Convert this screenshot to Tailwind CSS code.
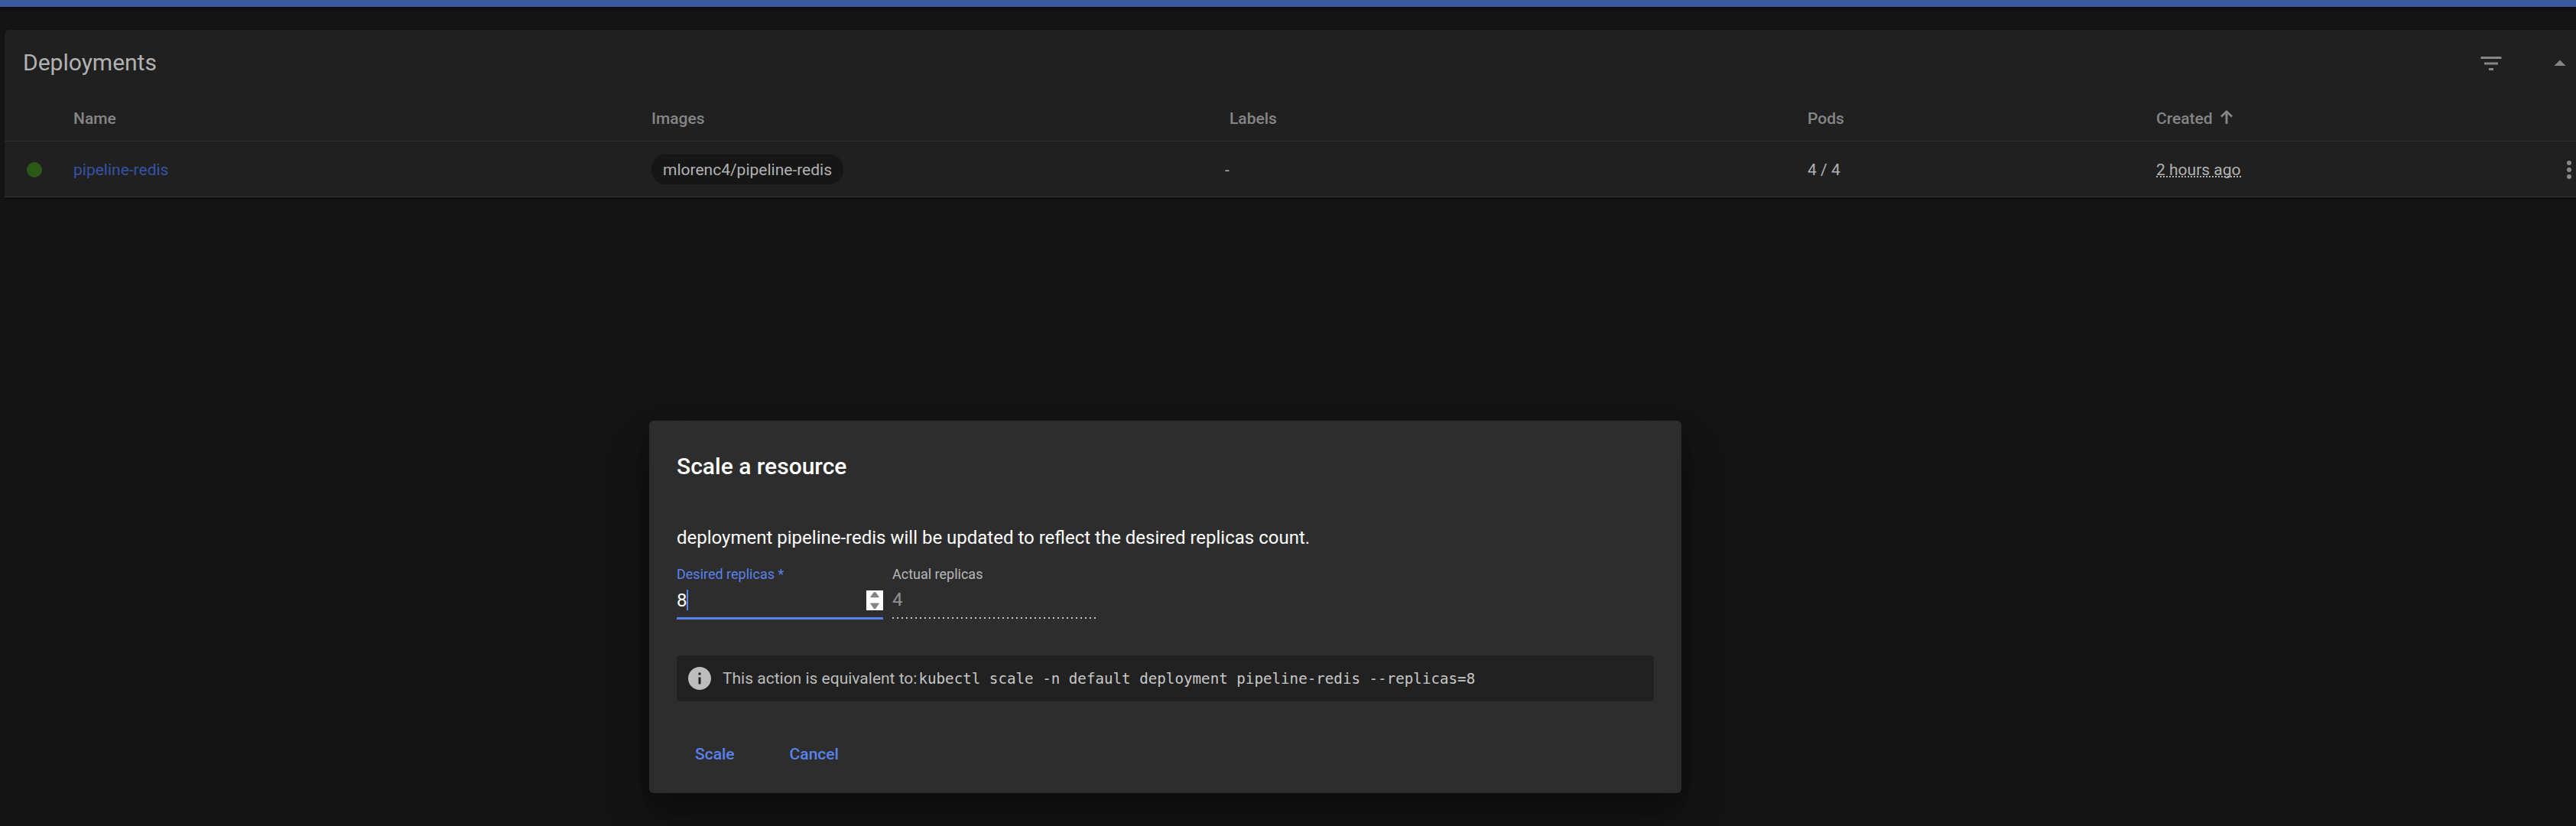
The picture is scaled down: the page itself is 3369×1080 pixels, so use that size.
<!DOCTYPE html>
<html lang="en">
<head>
<meta charset="utf-8">
<title>Deployments</title>
<script src="https://cdn.jsdelivr.net/npm/@tailwindcss/browser@4"></script>
</head>
<body class="h-[1080px] w-[3369px] overflow-hidden bg-[#141414] font-[Roboto,sans-serif] text-[21px] leading-7 text-[#b2b2b2]">
<header class="h-[9px] bg-[#3c589f] shadow-[0_3px_6px_rgba(0,0,0,.3)]"></header>
<main class="mt-[30px] ml-[6px] h-[219px] w-[3372px] rounded-t-md bg-[#202020] shadow-[0_2px_3px_rgba(0,0,0,.35)]">
  <div class="flex h-[86px] items-center pl-6">
    <h1 class="text-[30px] leading-9">Deployments</h1>
    <svg class="mt-0.5 ml-auto size-9 fill-[#868686]" viewBox="0 0 24 24"><path d="M10 18h4v-2h-4v2zM3 6v2h18V6H3zm3 7h12v-2H6v2z"/></svg>
    <svg class="mt-0.5 mr-3 ml-[54px] size-9 fill-[#868686]" viewBox="0 0 24 24"><path d="M7 14l5-5 5 5z"/></svg>
  </div>
  <div class="grid h-[60px] grid-cols-[90px_756px_756px_756px_456px_1fr] items-center border-b border-[#303030] font-medium text-[#868686]">
    <span></span><span>Name</span><span>Images</span><span>Labels</span><span>Pods</span>
    <span class="flex items-center">Created
      <svg class="mb-1 ml-[9px] h-[18px] w-[18px] fill-[#868686]" viewBox="0 0 18 18"><path d="M7.500 18V5L3 9.500 1 7.500 9 0l8 7.500-2 2L10.500 5V18z"/></svg>
    </span>
  </div>
  <div class="grid h-[73px] grid-cols-[90px_756px_750px_762px_456px_1fr] items-center border-b border-[#383838] pt-px">
    <span class="ml-[29px] size-5 rounded-full bg-[#2d5917]"></span>
    <a class="pt-px text-[#3653a5]">pipeline-redis</a>
    <span class="flex"><span class="flex h-[39px] items-center rounded-[18px] bg-[#161616] px-[15px] pt-px">mlorenc4/pipeline-redis</span></span>
    <span class="pt-px">-</span>
    <span class="pt-px">4 / 4</span>
    <div class="flex items-center">
      <span class="h-[21px] border-b-2 border-dotted border-[#b2b2b2] leading-[22px]">2 hours ago</span>
      <svg class="mr-0 ml-auto size-9 fill-[#868686]" viewBox="0 0 24 24"><circle cx="12" cy="6" r="2"/><circle cx="12" cy="12" r="2"/><circle cx="12" cy="18" r="2"/></svg>
    </div>
  </div>
</main>

<section class="mt-[292px] ml-[849px] flex h-[487px] w-[1350px] flex-col rounded-md bg-[#2d2d2d] px-9 pt-9 text-white shadow-[0_16px_22px_-10px_rgba(0,0,0,.2),0_36px_57px_4px_rgba(0,0,0,.14),0_14px_69px_12px_rgba(0,0,0,.12)]">
  <h2 class="text-[30px] leading-12 font-medium">Scale a resource</h2>
  <p class="mt-[51px] text-2xl leading-9">deployment pipeline-redis will be updated to reflect the desired replicas count.</p>
  <div class="mt-4 flex gap-3">
    <label class="flex h-[73px] w-[270px] flex-col border-b-3 border-[#5a82ec] text-lg leading-7 text-[#5a82ec]">Desired replicas *
      <span class="mt-[6px] flex h-[27px] items-center text-2xl text-white">8<span class="-ml-px h-[27px] w-0.5 bg-[#5a82ec]"></span>
        <svg class="ml-auto h-[26px] w-[22px]" viewBox="0 0 22 26"><path fill="#fdfdfd" d="M0 0h22v26H0z"/><path fill="#868686" d="M5.500 9.200V8L10 2h2l4.500 6v1.200zM5.500 16.500v1.200L10 24h2l4.500-6.300v-1.200z"/></svg>
      </span>
    </label>
    <label class="flex h-[73px] w-[270px] flex-col text-lg leading-7 text-[#b8b8b8]">Actual replicas
      <span class="mt-[6px] h-[27px] text-2xl leading-[27px] text-[#919191]">4</span>
      <span class="mt-[9px] h-0.5 w-[268px] bg-[repeating-linear-gradient(90deg,#c4c4c4_0_2px,transparent_2px_6px)]"></span>
    </label>
  </div>
  <div class="mt-[47px] flex h-[60px] items-center rounded bg-[#212121] pl-3 text-[#bcbcbc]">
    <svg class="size-9 fill-[#bdbdbd]" viewBox="0 0 24 24"><path d="M12 2C6.480 2 2 6.480 2 12s4.480 10 10 10 10-4.480 10-10S17.520 2 12 2zm1 15h-2v-6h2v6zm0-8h-2V7h2v2z"/></svg>
    <span class="ml-3">This action is equivalent to:</span>
    <code class="ml-[2px] pt-0.5 font-['DejaVu_Sans_Mono',monospace] text-[19.2px] text-[#c8c8c8]">kubectl scale -n default deployment pipeline-redis --replicas=8</code>
  </div>
  <div class="mt-[42px] flex h-[54px] items-center gap-[72px] pl-6 font-medium text-[#5a82ec]">
    <button>Scale</button><button>Cancel</button>
  </div>
</section>
</body>
</html>
